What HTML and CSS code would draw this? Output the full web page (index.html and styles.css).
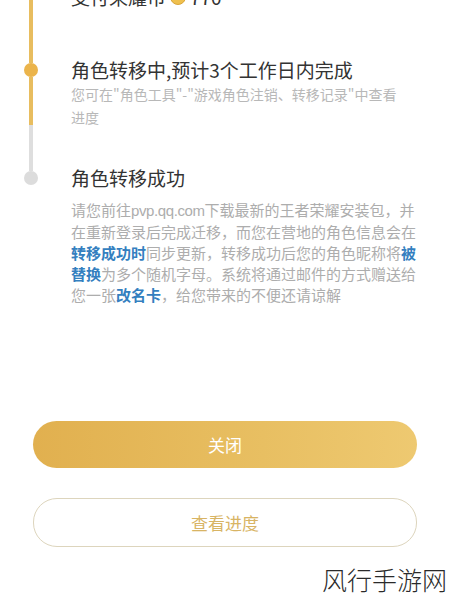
FILE: index.html
```html
<!DOCTYPE html>
<html lang="zh-CN">
<head>
<meta charset="utf-8">
<link rel="stylesheet" href="styles.css">
</head>
<body>
<div class="page">
  <div class="timeline">
    <div class="step step-a">
      <div class="rail"><div class="seg gold fill"></div></div>
      <div class="content">
        <div class="title">支付荣耀币 <span class="coin"></span> 770</div>
      </div>
    </div>
    <div class="step step-b">
      <div class="rail">
        <div class="seg gold top"></div>
        <div class="dot gold-dot"></div>
        <div class="seg gold mid"></div>
        <div class="seg grey fill"></div>
      </div>
      <div class="content">
        <div class="title">角色转移中,预计3个工作日内完成</div>
        <div class="sub">您可在"角色工具"-"游戏角色注销、转移记录"中查看<br>进度</div>
      </div>
    </div>
    <div class="step step-c">
      <div class="rail">
        <div class="seg grey top"></div>
        <div class="dot grey-dot"></div>
      </div>
      <div class="content">
        <div class="title">角色转移成功</div>
        <div class="desc">请您前往<span class="latin">pvp.qq.com</span>下载最新的王者荣耀安装包，并<br>在重新登录后完成迁移，而您在营地的角色信息会在<br><span class="link">转移成功时</span>同步更新，转移成功后您的角色昵称将<span class="link">被</span><br><span class="link">替换</span>为多个随机字母。系统将通过邮件的方式赠送给<br>您一张<span class="link">改名卡</span>，给您带来的不便还请谅解</div>
      </div>
    </div>
  </div>
  <div class="actions">
    <div class="btn primary">关闭</div>
    <div class="btn outline">查看进度</div>
  </div>
  <div class="watermark">风行手游网</div>
</div>
</body>
</html>
```
FILE: styles.css
```css
html, body {
  margin: 0;
  padding: 0;
  background: #ffffff;
}
body {
  width: 450px;
  height: 600px;
  overflow: hidden;
  font-family: "Noto Sans CJK SC", "Noto Sans", sans-serif;
}
.page {
  display: flex;
  flex-direction: column;
}
.timeline {
  display: flex;
  flex-direction: column;
  margin-top: -16px;
}
.step {
  display: flex;
}
.step-a { padding-bottom: 47px; }
.step-b { padding-bottom: 36px; }
.rail {
  width: 62px;
  flex: 0 0 62px;
  display: flex;
  flex-direction: column;
  align-items: center;
  margin-right: 9px;
}
.step-a .rail { margin-bottom: -47px; }
.step-b .rail { margin-bottom: -36px; }
.seg {
  width: 4px;
}
.seg.fill { flex: 1; }
.seg.top { height: 6px; }
.seg.mid { height: 48px; }
.gold { background: #e8bd5f; }
.grey { background: #dedede; }
.dot {
  width: 14px;
  height: 14px;
  border-radius: 50%;
  flex: 0 0 14px;
}
.gold-dot { background: #ebb44b; }
.grey-dot { background: #dcdcdc; }
.content {
  flex: 1;
  min-width: 0;
}
.title {
  font-size: 19px;
  line-height: 26px;
  color: #333333;
  white-space: nowrap;
  display: flex;
  align-items: center;
}
.coin {
  display: inline-block;
  width: 14px;
  height: 14px;
  border-radius: 50%;
  background: #efc04e;
  border: 1px solid #d9a53a;
  margin: 0 4px;
}
.sub {
  font-size: 14px;
  line-height: 23px;
  color: #b8b8b8;
  white-space: nowrap;
}
.desc {
  margin-top: 8px;
  font-size: 15px;
  line-height: 21px;
  color: #adadad;
  white-space: nowrap;
}
.latin {
  font-family: "Liberation Sans", sans-serif;
  font-size: 15px;
  letter-spacing: -0.4px;
}
.link {
  color: #347fbf;
  font-weight: bold;
}
.actions {
  display: flex;
  flex-direction: column;
  gap: 30px;
  margin: 116px 33px 0 33px;
}
.btn {
  height: 47px;
  border-radius: 24px;
  display: flex;
  align-items: center;
  justify-content: center;
  font-size: 17px;
}
.primary {
  background: linear-gradient(90deg, #e1b04f 0%, #e8bf62 60%, #eec971 100%);
  color: #ffffff;
}
.outline {
  height: 47px;
  border: 1px solid #ddd5bd;
  color: #d8b464;
  background: #ffffff;
}
.watermark {
  margin-top: 17px;
  text-align: right;
  padding-right: 3px;
  font-size: 25px;
  line-height: 30px;
  font-weight: 300;
  color: #2a2a2a;
}
```
